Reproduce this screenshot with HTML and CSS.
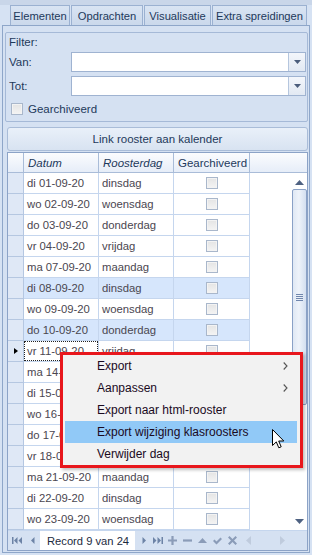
FILE: index.html
```html
<!DOCTYPE html>
<html>
<head>
<meta charset="utf-8">
<link rel="stylesheet" href="styles.css">
</head>
<body>
<div class="window">
  <div class="tabs">
    <div class="tab t1">Elementen</div>
    <div class="tab t2">Opdrachten</div>
    <div class="tab t3">Visualisatie</div>
    <div class="tab t4">Extra spreidingen</div>
  </div>
  <div class="panel">
    <div class="group">
      <div class="glabel">Filter:</div>
      <div class="frow">
        <span class="flabel">Van:</span>
        <div class="combo"><div class="cinput"></div><div class="cbtn"><svg width="7" height="4" viewBox="0 0 7 4"><path d="M0 0H7L3.5 4Z" fill="#4b5d7b"/></svg></div></div>
      </div>
      <div class="frow frow2">
        <span class="flabel">Tot:</span>
        <div class="combo"><div class="cinput"></div><div class="cbtn"><svg width="7" height="4" viewBox="0 0 7 4"><path d="M0 0H7L3.5 4Z" fill="#4b5d7b"/></svg></div></div>
      </div>
      <div class="crow"><span class="cb cbg"></span><span>Gearchiveerd</span></div>
    </div>
    <div class="linkbtn">Link rooster aan kalender</div>
    <div class="grid">
      <div class="ghead">
        <div class="hind"></div>
        <div class="hc h1"><i>Datum</i></div>
        <div class="hc h2"><i>Roosterdag</i></div>
        <div class="hc h3">Gearchiveerd</div>
        <div class="hrest"></div>
      </div>
      <div class="gbody">
        <div class="rows">
          <div class="row"><div class="ind"></div><div class="c c1">di 01-09-20</div><div class="c c2">dinsdag</div><div class="c c3"><span class="cb"></span></div><div class="rest"></div></div>
          <div class="row"><div class="ind"></div><div class="c c1">wo 02-09-20</div><div class="c c2">woensdag</div><div class="c c3"><span class="cb"></span></div><div class="rest"></div></div>
          <div class="row"><div class="ind"></div><div class="c c1">do 03-09-20</div><div class="c c2">donderdag</div><div class="c c3"><span class="cb"></span></div><div class="rest"></div></div>
          <div class="row"><div class="ind"></div><div class="c c1">vr 04-09-20</div><div class="c c2">vrijdag</div><div class="c c3"><span class="cb"></span></div><div class="rest"></div></div>
          <div class="row"><div class="ind"></div><div class="c c1">ma 07-09-20</div><div class="c c2">maandag</div><div class="c c3"><span class="cb"></span></div><div class="rest"></div></div>
          <div class="row sel"><div class="ind"></div><div class="c c1">di 08-09-20</div><div class="c c2">dinsdag</div><div class="c c3"><span class="cb"></span></div><div class="rest"></div></div>
          <div class="row"><div class="ind"></div><div class="c c1">wo 09-09-20</div><div class="c c2">woensdag</div><div class="c c3"><span class="cb"></span></div><div class="rest"></div></div>
          <div class="row sel"><div class="ind"></div><div class="c c1">do 10-09-20</div><div class="c c2">donderdag</div><div class="c c3"><span class="cb"></span></div><div class="rest"></div></div>
          <div class="row focus"><div class="ind"><span class="tri"></span></div><div class="c c1"><span class="fbox">vr 11-09-20</span></div><div class="c c2">vrijdag</div><div class="c c3"><span class="cb"></span></div><div class="rest"></div></div>
          <div class="row"><div class="ind"></div><div class="c c1">ma 14-09-20</div><div class="c c2">maandag</div><div class="c c3"><span class="cb"></span></div><div class="rest"></div></div>
          <div class="row"><div class="ind"></div><div class="c c1">di 15-09-20</div><div class="c c2">dinsdag</div><div class="c c3"><span class="cb"></span></div><div class="rest"></div></div>
          <div class="row"><div class="ind"></div><div class="c c1">wo 16-09-20</div><div class="c c2">woensdag</div><div class="c c3"><span class="cb"></span></div><div class="rest"></div></div>
          <div class="row"><div class="ind"></div><div class="c c1">do 17-09-20</div><div class="c c2">donderdag</div><div class="c c3"><span class="cb"></span></div><div class="rest"></div></div>
          <div class="row"><div class="ind"></div><div class="c c1">vr 18-09-20</div><div class="c c2">vrijdag</div><div class="c c3"><span class="cb"></span></div><div class="rest"></div></div>
          <div class="row"><div class="ind"></div><div class="c c1">ma 21-09-20</div><div class="c c2">maandag</div><div class="c c3"><span class="cb"></span></div><div class="rest"></div></div>
          <div class="row"><div class="ind"></div><div class="c c1">di 22-09-20</div><div class="c c2">dinsdag</div><div class="c c3"><span class="cb"></span></div><div class="rest"></div></div>
          <div class="row"><div class="ind"></div><div class="c c1">wo 23-09-20</div><div class="c c2">woensdag</div><div class="c c3"><span class="cb"></span></div><div class="rest"></div></div>
        </div>
        <div class="vscroll">
          <div class="sarrow"><svg width="9" height="5" viewBox="0 0 9 5"><path d="M0 5H9L4.5 0Z" fill="#4f6282"/></svg></div>
          <div class="thumb"><span class="grip"></span></div>
          <div class="strack"></div>
          <div class="sarrow sdown"><svg width="9" height="5" viewBox="0 0 9 5"><path d="M0 0H9L4.5 5Z" fill="#4f6282"/></svg></div>
        </div>
      </div>
      <div class="nav">
        <div class="navbtns">
          <svg width="10" height="7" viewBox="0 0 10 7"><rect x="0" y="0" width="1.5" height="7" fill="#6d83a6"/><path d="M5.5 0V7L2 3.5Z M10 0V7L6.5 3.5Z" fill="#6d83a6"/></svg>
          <svg width="5" height="7" viewBox="0 0 5 7"><path d="M4.5 0V7L1 3.5Z" fill="#6d83a6"/></svg>
        </div>
        <div class="record">Record 9 van 24</div>
        <div class="navbtns2">
          <svg width="5" height="7" viewBox="0 0 5 7"><path d="M0.5 0V7L4 3.5Z" fill="#6d83a6"/></svg>
          <svg width="10" height="7" viewBox="0 0 10 7"><path d="M0 0V7L3.5 3.5Z M4.5 0V7L8 3.5Z" fill="#6d83a6"/><rect x="8.5" y="0" width="1.5" height="7" fill="#6d83a6"/></svg>
          <svg width="9" height="9" viewBox="0 0 9 9"><path d="M3.4 0H5.6V3.4H9V5.6H5.6V9H3.4V5.6H0V3.4H3.4Z" fill="#8b9cb8"/></svg>
          <svg width="9" height="3" viewBox="0 0 9 3"><rect width="9" height="2.2" y="0.4" fill="#8b9cb8"/></svg>
          <svg width="9" height="5" viewBox="0 0 9 5"><path d="M0 5H9L4.5 0Z" fill="#8b9cb8"/></svg>
          <svg width="9" height="8" viewBox="0 0 9 8"><path d="M0 4L1.5 2.5L3.5 4.5L7.5 0.5L9 2L3.5 7.5Z" fill="#8b9cb8"/></svg>
          <svg width="9" height="9" viewBox="0 0 9 9"><path d="M1.5 0L4.5 3L7.5 0L9 1.5L6 4.5L9 7.5L7.5 9L4.5 6L1.5 9L0 7.5L3 4.5L0 1.5Z" fill="#8b9cb8"/></svg>
        </div>
        <div class="hs">
          <svg width="5" height="9" viewBox="0 0 5 9"><path d="M5 0V9L0 4.5Z" fill="#bfcbdd"/></svg>
          <svg width="5" height="9" viewBox="0 0 5 9"><path d="M0 0V9L5 4.5Z" fill="#bfcbdd"/></svg>
        </div>
        <div class="corner"></div>
      </div>
    </div>
  </div>

  <div class="menu">
    <div class="mi"><span>Export</span><svg class="marr" width="5" height="8" viewBox="0 0 5 8"><path d="M0.7 0.5L4 4L0.7 7.5" fill="none" stroke="#555" stroke-width="1.1"/></svg></div>
    <div class="mi"><span>Aanpassen</span><svg class="marr" width="5" height="8" viewBox="0 0 5 8"><path d="M0.7 0.5L4 4L0.7 7.5" fill="none" stroke="#555" stroke-width="1.1"/></svg></div>
    <div class="mi"><span>Export naar html-rooster</span></div>
    <div class="mi hl"><span>Export wijziging klasroosters</span></div>
    <div class="mi"><span>Verwijder dag</span></div>
  </div>
  <svg class="cursor" width="13" height="20" viewBox="0 0 13 20"><path d="M0.5 0.5V16.5L4.3 12.9L6.8 18.8L9.2 17.8L6.7 12H11.8Z" fill="#fff" stroke="#000" stroke-width="1" stroke-linejoin="miter"/></svg>
</div>
</body>
</html>
```
FILE: styles.css
```css
* { box-sizing: border-box; }
body { margin: 0; font-family: "Liberation Sans", Arial, sans-serif; font-size: 11px; color: #1e395b; }

.window {
  position: relative;
  width: 312px;
  height: 555px;
  background: #d6e2f3;
  overflow: hidden;
  border-top: 5px solid #c9d6e9;
}

.tabs { display: flex; margin-left: 10px; height: 20px; }
.tab {
  height: 20px;
  border: 1px solid #9bb1d1;
  border-bottom: none;
  margin-right: 1px;
  background: linear-gradient(#d9e4f3, #cad8eb);
  display: flex; align-items: center; justify-content: center;
  color: #1e395b;
  font-size: 11.2px;
}
.tab:last-child { margin-right: 0; }
.t1 { width: 60px; }
.t2 { width: 72px; }
.t3 { width: 67px; }
.t4 { width: 95px; }

.panel {
  margin-left: 2px;
  width: 308px;
  height: 528px;
  border: 1px solid #8ea6c9;
  background: #d5e1f2;
  display: flex; flex-direction: column;
}

.group {
  margin: 6px 1px 0 2px;
  height: 90px;
  border: 1px solid #a5b9d7;
  border-radius: 2px;
  padding: 0 0 0 3px;
}
.glabel { height: 18px; line-height: 18px; font-size: 11.5px; }
.frow { display: flex; align-items: center; margin-top: 1px; height: 20px; }
.frow2 { margin-top: 4px; }
.flabel { width: 62px; font-size: 11.5px; }
.combo { width: 235px; height: 20px; display: flex; border: 1px solid #9fb3d1; background: #fff; }
.cinput { flex: 1; }
.cbtn {
  width: 17px; border-left: 1px solid #b5c6de;
  background: linear-gradient(#f3f6fb, #e2e9f3);
  display: flex; align-items: center; justify-content: center;
}
.crow { display: flex; align-items: center; margin-top: 6px; height: 14px; font-size: 11.5px; gap: 5px; padding-left: 2px; }

.cb {
  display: inline-block;
  width: 12px; height: 12px;
  border: 1px solid #a9b7cb;
  background: linear-gradient(#e4e4e4, #f4f4f4);
  box-shadow: inset 0 0 0 1px #f3f3f3;
}

.linkbtn {
  margin: 5px 1px 0 4px;
  height: 24px;
  border: 1px solid #a9bcd8;
  border-radius: 3px;
  background: linear-gradient(#e9f0f9, #d8e3f1);
  display: flex; align-items: center; justify-content: center;
  font-size: 11.5px;
  color: #1e395b;
}

.grid {
  margin: 1px 1px 0 4px;
  border: 1px solid #8ca3c7;
  background: #fff;
  display: flex; flex-direction: column;
}
.ghead { display: flex; height: 20px; border-bottom: 1px solid #a9bcd8; background: linear-gradient(#fbfcfe, #e6edf8); }
.hind { width: 16px; border-right: 1px solid #a9bcd8; }
.hc { border-right: 1px solid #a9bcd8; display: flex; align-items: center; padding-left: 4px; font-size: 11.5px; color: #1e395b; }
.h1 { width: 75px; }
.h2 { width: 75px; }
.h3 { width: 76px; }
.hrest { flex: 1; }

.gbody { display: flex; height: 357px; }
.rows { width: 283px; }
.row { display: flex; height: 21px; }
.ind { width: 16px; background: #dfe8f6; border-right: 1px solid #b5c7e1; border-bottom: 1px solid #b5c7e1; display: flex; align-items: center; justify-content: center; }
.c { border-right: 1px solid #c5d6ee; border-bottom: 1px solid #c5d6ee; display: flex; align-items: center; padding-left: 3px; color: #4a4650; font-size: 11.3px; }
.c1 { width: 75px; }
.c2 { width: 75px; }
.c3 { width: 76px; justify-content: center; padding-left: 0; }
.rest { flex: 1; }
.sel .c { background: #d6e6fc; }
.tri { width: 0; height: 0; border-top: 3.5px solid transparent; border-bottom: 3.5px solid transparent; border-left: 4px solid #000; margin-left: 1px; }
.focus .c1 { padding-left: 0; }
.fbox { display: flex; align-items: center; width: 74px; height: 20px; outline: 1px dotted #222; outline-offset: -1px; padding-left: 3px; }

.vscroll { width: 16px; display: flex; flex-direction: column; align-items: center; background: #fff; }
.sarrow { height: 16px; width: 16px; display: flex; align-items: center; justify-content: center; flex: none; padding-top: 2px; }
.sdown { padding-top: 0; padding-bottom: 2px; }
.thumb {
  width: 15px; height: 216px;
  border: 1px solid #8aa1c6;
  border-radius: 2px;
  background: linear-gradient(90deg, #dfe8f4, #eef3fa 45%, #d3dff0);
  display: flex; align-items: center; justify-content: center;
  flex: none;
}
.grip { width: 7px; height: 7px; background: repeating-linear-gradient(#6f86ad 0 1px, transparent 1px 2px); }
.strack { flex: 1; }

.nav { display: flex; align-items: center; height: 20px; background: #d5e1f2; border-top: 1px solid #c5d6ee; }
.navbtns { display: flex; align-items: center; width: 32px; padding-left: 4px; gap: 8px; }
.record { width: 95px; height: 19px; background: #fff; display: flex; align-items: center; padding-left: 7px; font-size: 11.2px; color: #1c2a3e; }
.navbtns2 { display: flex; align-items: center; gap: 6px; padding-left: 7px; }
.navbtns2 svg:nth-child(3) { margin-left: -1px; }
.hs { display: flex; align-items: center; justify-content: space-between; width: 39px; margin-left: 9px; }
.corner { flex: 1; }

.menu {
  position: absolute;
  left: 60px; top: 347px;
  width: 243px; height: 116px;
  border: 3px solid #e8171d;
  background: #f2f2f2;
  box-shadow: 2px 2px 3px rgba(0,0,0,0.25);
  padding: 0 3px 0 2px;
  font-size: 12px;
  color: #1a0a1e;
}
.mi { height: 22px; display: flex; align-items: center; justify-content: space-between; padding: 0 9px 0 32px; }
.mi.hl { background: #91c9f7; }
.cursor { position: absolute; left: 272px; top: 424px; }
```
